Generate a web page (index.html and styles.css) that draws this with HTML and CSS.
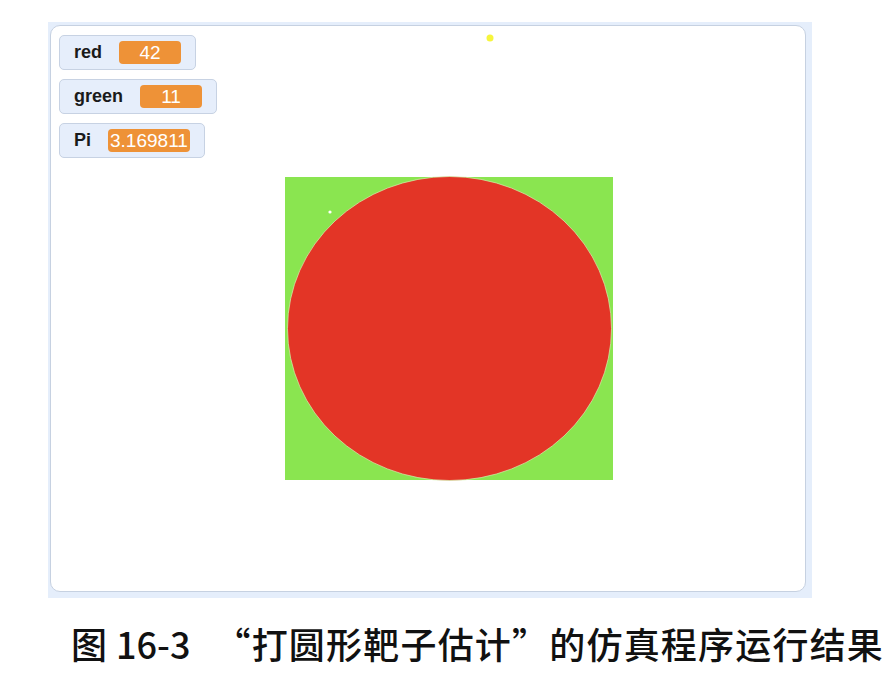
FILE: index.html
```html
<!DOCTYPE html>
<html lang="zh-CN">
<head>
<meta charset="utf-8">
<title>打圆形靶子估计</title>
<link rel="stylesheet" href="styles.css">
</head>
<body>
<div class="frame">
  <div class="stage">
    <svg class="canvas" width="754" height="565" viewBox="0 0 754 565" xmlns="http://www.w3.org/2000/svg">
      <rect x="234" y="151" width="328" height="303" fill="#8ae550"/>
      <ellipse cx="398.5" cy="302.5" rx="162" ry="152" fill="#e33526" stroke="#d4f2b0" stroke-width="0.7"/>
      <circle cx="279" cy="186" r="1.6" fill="#ffffff"/>
      <circle cx="439" cy="12" r="3.5" fill="#f6f53d"/>
    </svg>
    <div class="monitors">
      <div class="monitor"><span class="label">red</span><span class="value">42</span></div>
      <div class="monitor"><span class="label">green</span><span class="value">11</span></div>
      <div class="monitor"><span class="label">Pi</span><span class="value">3.169811</span></div>
    </div>
  </div>
</div>
<p class="caption"><span>图</span><span class="num">16-3</span><span class="title">“打圆形靶子估计”的仿真程序运行结果</span></p>
</body>
</html>
```
FILE: styles.css
```css
html, body {
  margin: 0;
  padding: 0;
  background: #ffffff;
}
.frame {
  margin: 22px 0 0 48px;
  width: 764px;
  height: 576px;
  background: #e5eefb;
  padding: 3px 0 0 2px;
  box-sizing: border-box;
}
.stage {
  position: relative;
  width: 756px;
  height: 567px;
  box-sizing: border-box;
  background: #ffffff;
  border: 1px solid #c6d1e1;
  border-radius: 10px;
  padding: 9px 0 0 8px;
}
.canvas {
  position: absolute;
  left: 0;
  top: 0;
}
.monitors {
  position: relative;
  display: flex;
  flex-direction: column;
  align-items: flex-start;
  gap: 9px;
}
.monitor {
  display: flex;
  align-items: center;
  gap: 17px;
  height: 35px;
  box-sizing: border-box;
  padding: 0 14px 0 14px;
  background: #e6eefb;
  border: 1px solid #c7d2e3;
  border-radius: 5px;
  font-family: "Liberation Sans", Arial, sans-serif;
}
.label {
  font-size: 18px;
  font-weight: 700;
  color: #1a1a1a;
}
.value {
  min-width: 62px;
  height: 23px;
  line-height: 23px;
  box-sizing: border-box;
  padding: 0 2px;
  border-radius: 4px;
  background: #ee9237;
  color: #ffffff;
  font-size: 19px;
  text-align: center;
}
.caption {
  margin: 25px 0 0 71px;
  font-family: "Noto Sans CJK SC", "DejaVu Sans", sans-serif;
  font-size: 36px;
  line-height: 40px;
  font-weight: 500;
  color: #111111;
  white-space: nowrap;
}
.num {
  margin-left: 9px;
}
.title {
  margin-left: 24px;
  letter-spacing: 1.2px;
}
```
